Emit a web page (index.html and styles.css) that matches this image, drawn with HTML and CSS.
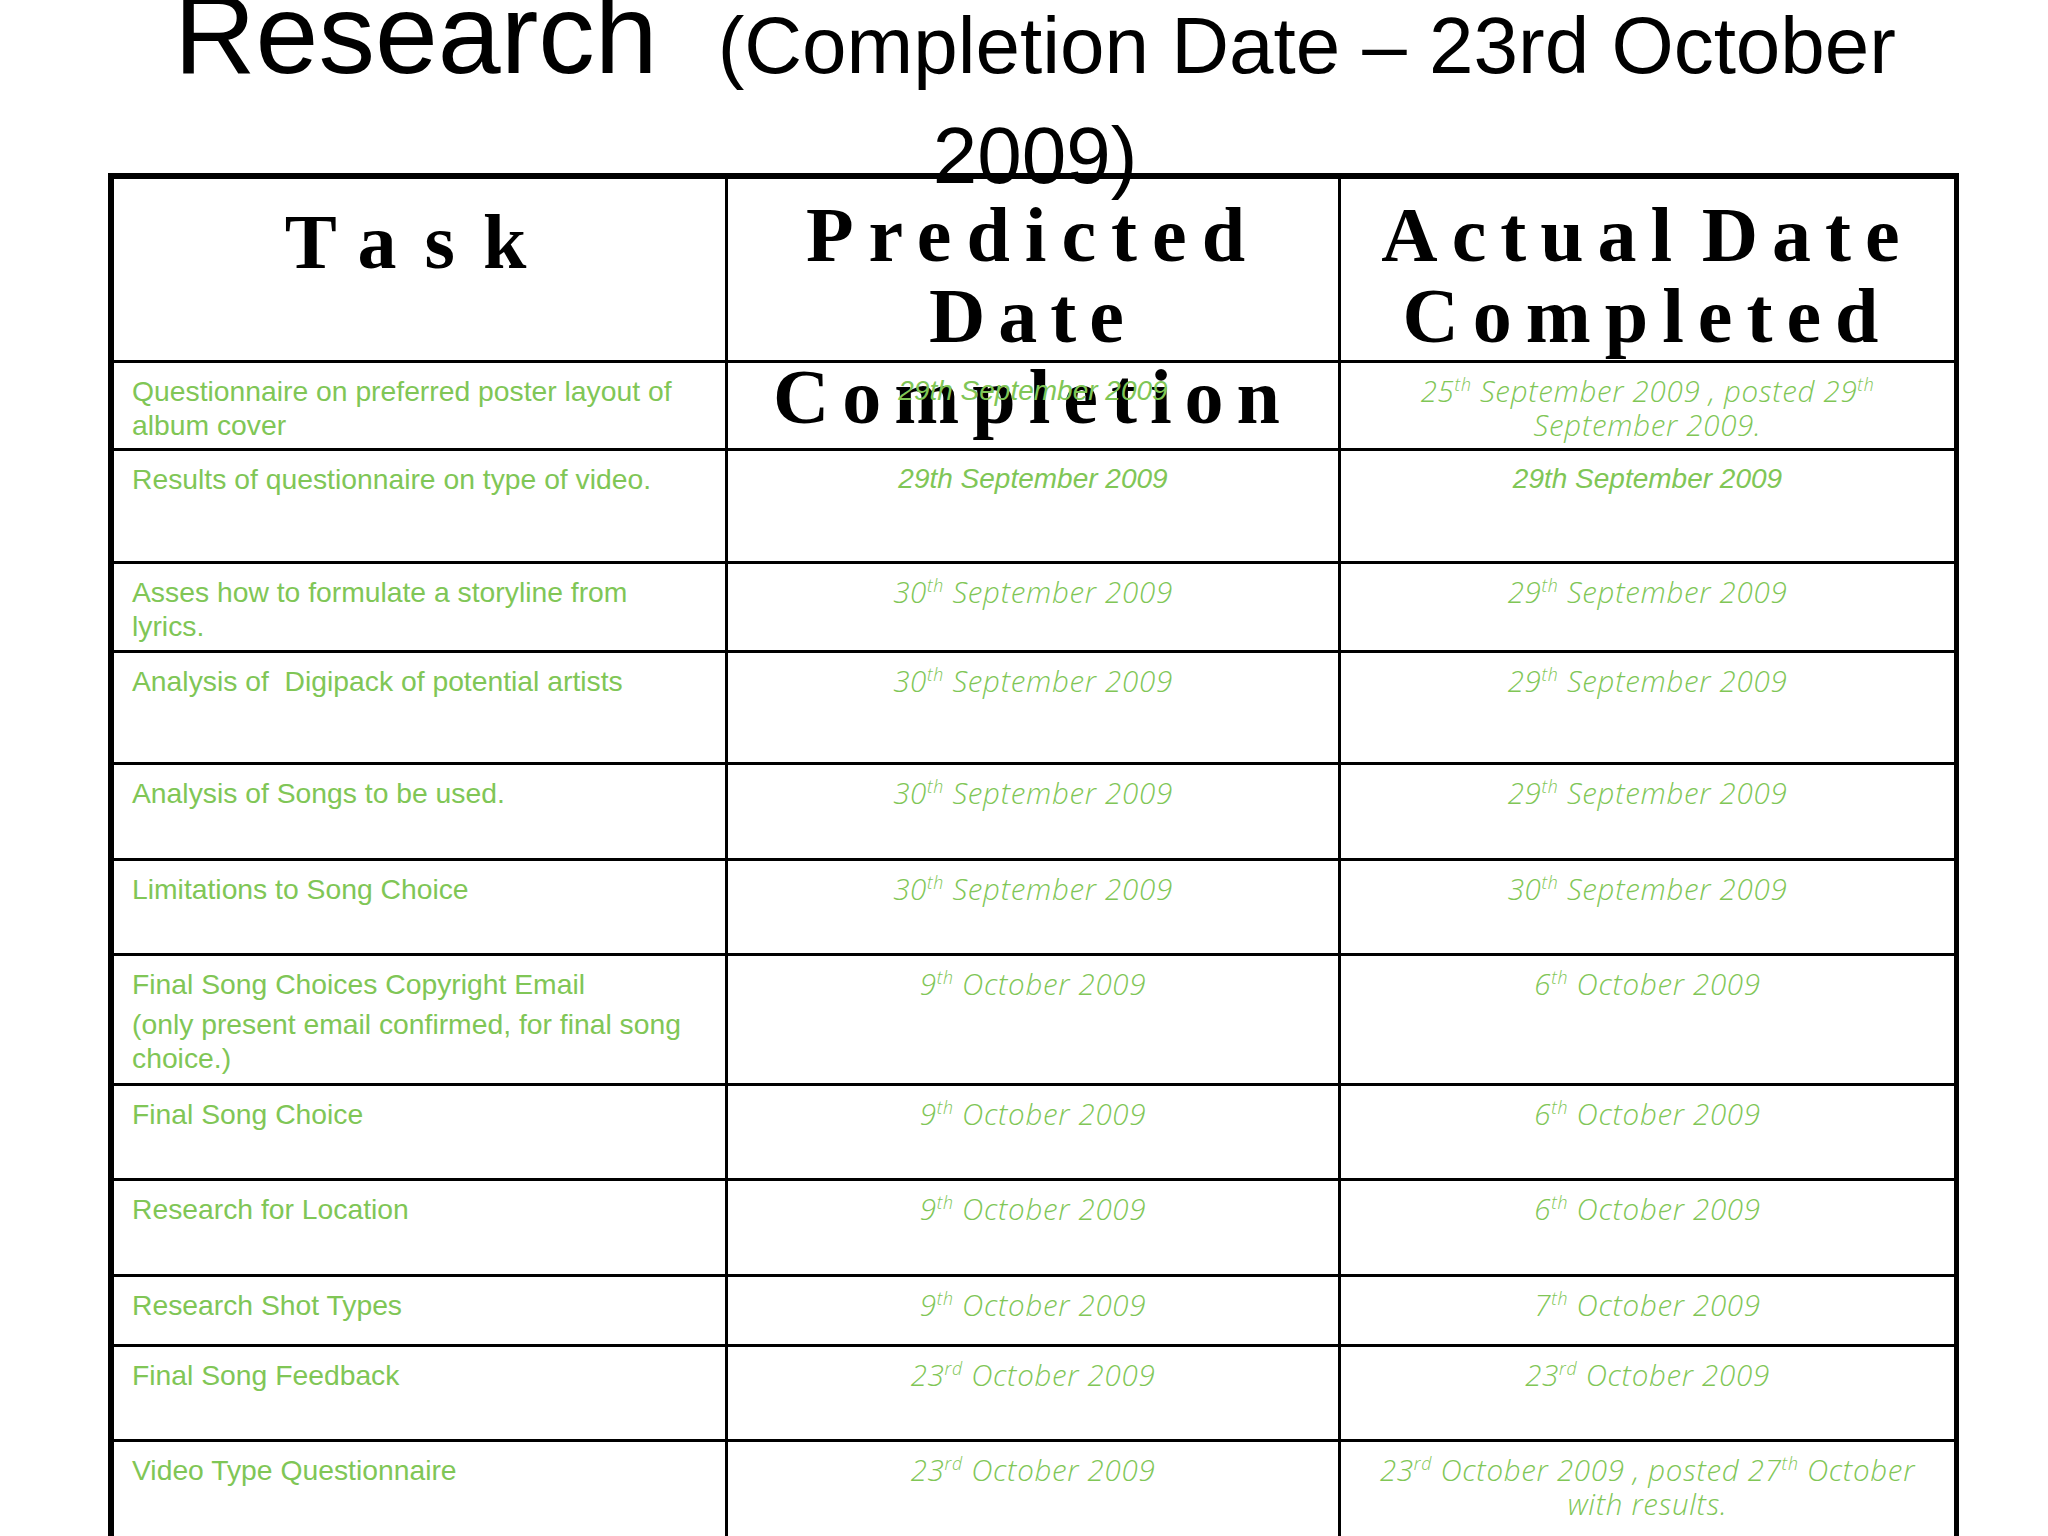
FILE: index.html
```html
<!DOCTYPE html>
<html lang="en">
<head>
<meta charset="utf-8">
<title>Research (Completion Date – 23rd October 2009)</title>
<link rel="stylesheet" href="styles.css">
</head>
<body>
<div class="slide">
  <div class="title-wrap">
    <h1 class="title"><span class="title-main">Research</span><span class="title-sub">(Completion Date – 23rd October 2009)</span></h1>
  </div>
  <div class="table">
    <div class="cell head"><div class="head-text task-head">Task</div></div>
    <div class="cell head"><div class="head-text"><span class="ls-wide">Predicted</span><br><span class="ls-tight">Date</span><br><span class="ls-tight">Completion</span></div></div>
    <div class="cell head"><div class="head-text actual-head">Actual Date<br>Completed</div></div>

    <div class="cell task">Questionnaire on preferred poster layout of album cover</div>
    <div class="cell date arial">29th September 2009</div>
    <div class="cell date">25<sup>th</sup> September 2009 , posted 29<sup>th</sup> September 2009.</div>

    <div class="cell task">Results of questionnaire on type of video.</div>
    <div class="cell date arial">29th September 2009</div>
    <div class="cell date arial">29th September 2009</div>

    <div class="cell task">Asses how to formulate a storyline from lyrics.</div>
    <div class="cell date">30<sup>th</sup> September 2009</div>
    <div class="cell date">29<sup>th</sup> September 2009</div>

    <div class="cell task">Analysis of&nbsp; Digipack of potential artists</div>
    <div class="cell date">30<sup>th</sup> September 2009</div>
    <div class="cell date">29<sup>th</sup> September 2009</div>

    <div class="cell task">Analysis of Songs to be used.</div>
    <div class="cell date">30<sup>th</sup> September 2009</div>
    <div class="cell date">29<sup>th</sup> September 2009</div>

    <div class="cell task">Limitations to Song Choice</div>
    <div class="cell date">30<sup>th</sup> September 2009</div>
    <div class="cell date">30<sup>th</sup> September 2009</div>

    <div class="cell task"><p class="para">Final Song Choices Copyright Email</p><p class="para para-next">(only present email confirmed, for final song choice.)</p></div>
    <div class="cell date">9<sup>th</sup> October 2009</div>
    <div class="cell date">6<sup>th</sup> October 2009</div>

    <div class="cell task">Final Song Choice</div>
    <div class="cell date">9<sup>th</sup> October 2009</div>
    <div class="cell date">6<sup>th</sup> October 2009</div>

    <div class="cell task">Research for Location</div>
    <div class="cell date">9<sup>th</sup> October 2009</div>
    <div class="cell date">6<sup>th</sup> October 2009</div>

    <div class="cell task">Research Shot Types</div>
    <div class="cell date">9<sup>th</sup> October 2009</div>
    <div class="cell date">7<sup>th</sup> October 2009</div>

    <div class="cell task">Final Song Feedback</div>
    <div class="cell date">23<sup>rd</sup> October 2009</div>
    <div class="cell date">23<sup>rd</sup> October 2009</div>

    <div class="cell task">Video Type Questionnaire</div>
    <div class="cell date">23<sup>rd</sup> October 2009</div>
    <div class="cell date">23<sup>rd</sup> October 2009 , posted 27<sup>th</sup> October with results.</div>
  </div>
</div>
</body>
</html>
```

FILE: styles.css
```css
html, body {
  margin: 0;
  padding: 0;
  background: #ffffff;
}

.slide {
  width: 2048px;
  height: 1536px;
  overflow: hidden;
  background: #ffffff;
}

.title-wrap {
  display: flow-root;
  height: 173px;
}

.title {
  margin: -9px 0 0 155px;
  width: 1760px;
  text-align: center;
  font-family: "Liberation Sans", Arial, sans-serif;
  font-weight: normal;
  font-size: 80px;
  line-height: 110px;
  color: #000;
}

.title-main {
  font-size: 113px;
  line-height: 80px;
}

.title-sub {
  margin-left: 60px;
}

.table {
  margin-left: 108px;
  width: 1840px;
  display: grid;
  grid-template-columns: 614px 613px 613px;
  grid-template-rows: 184px 88px 113px 89px 112px 96px 95px 130px 95px 96px 70px 95px 130px;
  border-top: 6px solid #000;
  border-left: 6px solid #000;
  border-right: 5px solid #000;
}

.cell {
  box-sizing: border-box;
  min-width: 0;
  border-right: 3px solid #000;
  border-bottom: 3px solid #000;
}

.cell:nth-child(3n) {
  border-right: none;
}

.head-text {
  padding-top: 15px;
  font-family: "Liberation Serif", "Times New Roman", serif;
  font-weight: bold;
  font-size: 78px;
  line-height: 81px;
  letter-spacing: 15px;
  text-align: center;
  color: #000;
}

.ls-wide {
  letter-spacing: 15px;
}

.ls-tight {
  letter-spacing: 13px;
}

.task-head {
  padding-top: 22px;
  letter-spacing: 28px;
}

.actual-head {
  letter-spacing: 14px;
  word-spacing: -18px;
}

.task {
  padding: 11px 28px 0 18px;
  font-family: "Liberation Sans", Arial, sans-serif;
  font-size: 28.3px;
  line-height: 34px;
  color: #80c656;
}

.para {
  margin: 0;
}

.para-next {
  margin-top: 6px;
}

.date {
  position: relative;
  padding: 11px 18px 0;
  text-align: center;
  font-family: "Open Sans", "DejaVu Sans", sans-serif;
  font-weight: 300;
  font-style: italic;
  font-size: 29.5px;
  letter-spacing: 0.7px;
  line-height: 34px;
  color: #80c656;
}

.date.arial {
  font-family: "Liberation Sans", Arial, sans-serif;
  font-weight: normal;
  font-size: 28px;
  letter-spacing: 0;
}

.date sup {
  font-size: 0.6em;
  line-height: 0;
  vertical-align: 0.6em;
}
```
